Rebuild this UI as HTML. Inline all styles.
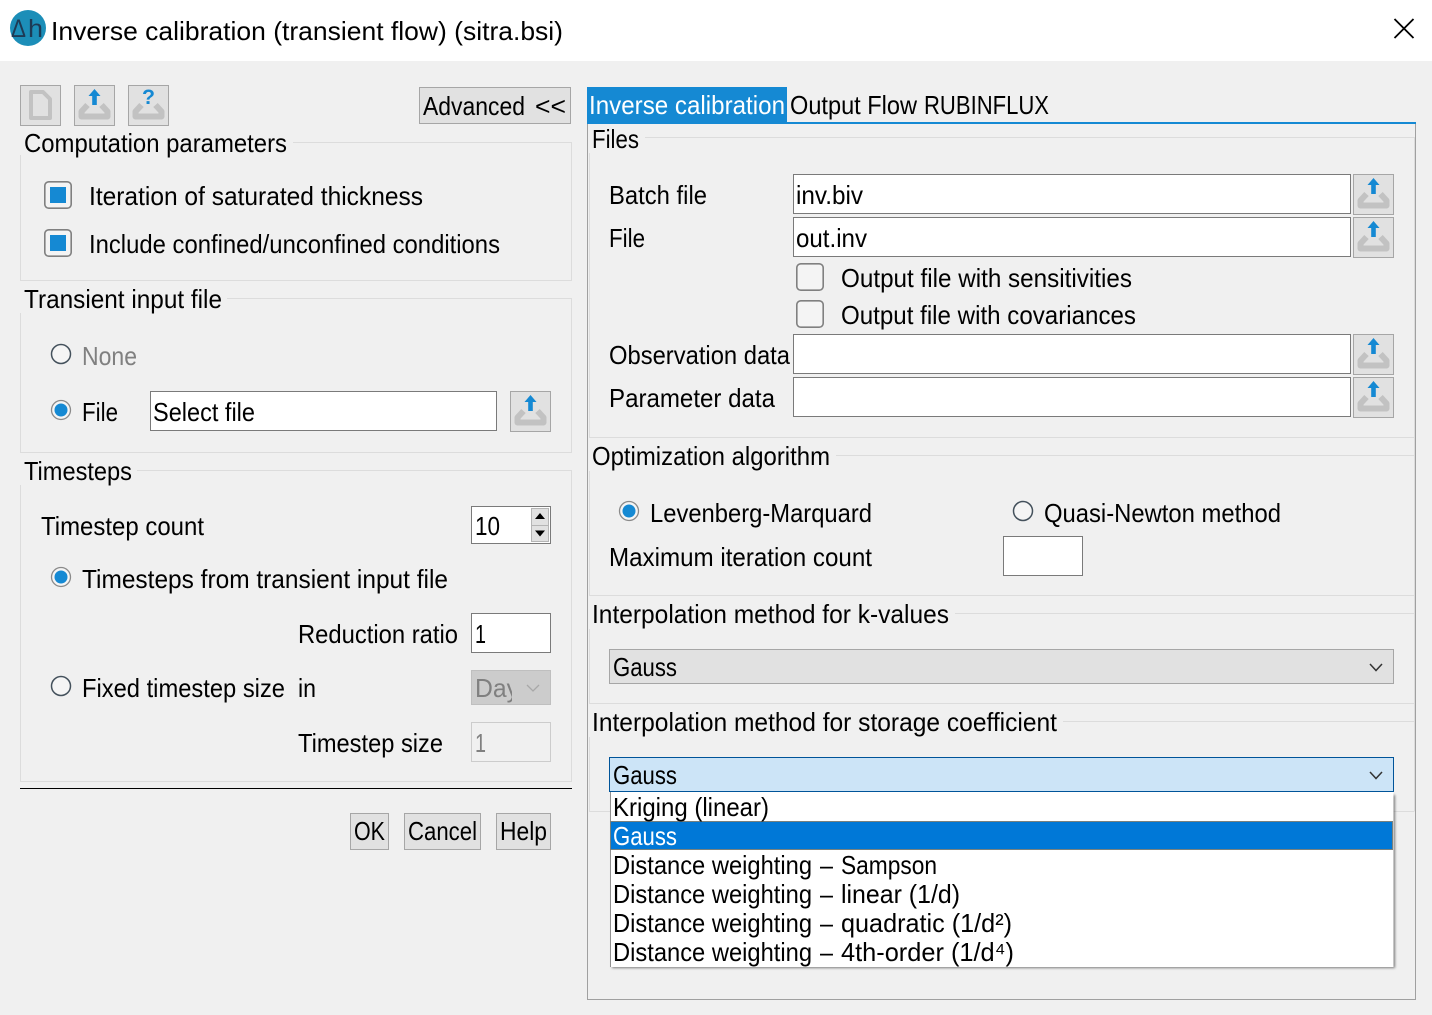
<!DOCTYPE html>
<html><head><meta charset="utf-8"><title>Inverse calibration</title>
<style>
html,body{margin:0;padding:0;background:#f0f0f0;overflow:hidden}
svg{display:block}
text{font-family:"Liberation Sans",sans-serif;font-size:26px;fill:#000}
.g{fill:#808080}
.w{fill:#fff}
.in{fill:#fff;stroke:#7a7a7a;stroke-width:1}
.btn{fill:#e1e1e1;stroke:#a6a6a6;stroke-width:1}
.gb{fill:none;stroke:#dcdcdc;stroke-width:1}
</style></head><body>
<svg width="1432" height="1015" viewBox="0 0 1432 1015" xmlns="http://www.w3.org/2000/svg">
<defs>
<filter id="sh" x="-2%" y="-5%" width="104%" height="110%"><feGaussianBlur stdDeviation="1.200"/></filter>
<g id="tray"><path d="M13.500 20 L7.500 26.500 V31.500 H33.500 V26.500 L27.500 20" fill="none" stroke="#c2c2c2" stroke-width="6" stroke-linejoin="round"/></g>
<g id="up"><rect x="0.500" y="0.500" width="40" height="40" class="btn"/><use href="#tray"/><path d="M20.500 4 L26.500 11 H22.800 V20 H18.200 V11 H14.500 Z" fill="#1589d3"/></g>
<g id="cb"><rect x="0.800" y="0.800" width="26.400" height="26.400" rx="4" fill="#f4f4f4" stroke="#808080" stroke-width="1.600"/></g>
<g id="cbc"><use href="#cb"/><rect x="6" y="6" width="16" height="16" fill="#1589d3"/></g>
<g id="rc"><circle r="9.500" fill="#f5f5f5" stroke="#8a8a8a" stroke-width="1.300"/><circle r="6.500" fill="#1589d3"/></g>
<g id="ro"><circle r="9.500" fill="#f5f5f5" stroke="#44515c" stroke-width="1.500"/></g>
</defs>

<rect width="1432" height="1015" fill="#f0f0f0"/>
<rect width="1432" height="61" fill="#fff"/>
<circle cx="28" cy="28" r="18" fill="#1c8eb8"/>
<text x="11" y="37" textLength="15" lengthAdjust="spacingAndGlyphs" style="font-size:25px;fill:#1d3a55">Δ</text>
<text x="28" y="37" textLength="15" lengthAdjust="spacingAndGlyphs" style="font-size:25px;fill:#1d3a55">h</text>
<text x="51" y="40" textLength="512" lengthAdjust="spacingAndGlyphs">Inverse calibration (transient flow) (sitra.bsi)</text>
<path d="M1394.500 19 L1413.500 38 M1413.500 19 L1394.500 38" stroke="#000" stroke-width="1.800"/>

<!-- toolbar -->
<rect x="20.500" y="85.500" width="40" height="40" class="btn"/>
<path d="M31 92 H43 L50 99 V118 H31 Z" fill="none" stroke="#c2c2c2" stroke-width="4" stroke-linejoin="round"/>
<use href="#up" x="74" y="85"/>
<rect x="128.500" y="85.500" width="40" height="40" class="btn"/>
<use href="#tray" x="128" y="85"/>
<text x="142" y="104" textLength="13" lengthAdjust="spacingAndGlyphs" style="font-size:21px;font-weight:bold;fill:#1589d3">?</text>
<rect x="419.500" y="87.500" width="151" height="36" class="btn"/>
<text x="423" y="115" textLength="102" lengthAdjust="spacingAndGlyphs">Advanced</text>
<text x="535" y="115" textLength="31" lengthAdjust="spacingAndGlyphs">&lt;&lt;</text>

<!-- left groups -->
<path d="M20.500 155 V280.500 H571.500 V142.500 H293" class="gb"/>
<text x="24" y="152" textLength="263" lengthAdjust="spacingAndGlyphs">Computation parameters</text>
<use href="#cbc" x="44" y="181"/>
<text x="89" y="205" textLength="334" lengthAdjust="spacingAndGlyphs">Iteration of saturated thickness</text>
<use href="#cbc" x="44" y="229"/>
<text x="89" y="253" textLength="411" lengthAdjust="spacingAndGlyphs">Include confined/unconfined conditions</text>

<path d="M20.500 313 V452.500 H571.500 V298.500 H227" class="gb"/>
<text x="24" y="308" textLength="198" lengthAdjust="spacingAndGlyphs">Transient input file</text>
<use href="#ro" x="61" y="354"/>
<text x="82" y="365" textLength="55" lengthAdjust="spacingAndGlyphs" class="g">None</text>
<use href="#rc" x="61" y="410"/>
<text x="82" y="421" textLength="36" lengthAdjust="spacingAndGlyphs">File</text>
<rect x="150.500" y="391.500" width="346" height="39" class="in"/>
<text x="153" y="421" textLength="102" lengthAdjust="spacingAndGlyphs">Select file</text>
<use href="#up" x="510" y="391"/>

<path d="M20.500 485 V781.500 H571.500 V470.500 H137" class="gb"/>
<text x="24" y="480" textLength="108" lengthAdjust="spacingAndGlyphs">Timesteps</text>
<text x="41" y="535" textLength="163" lengthAdjust="spacingAndGlyphs">Timestep count</text>
<rect x="471.500" y="506.500" width="79" height="37" class="in"/>
<text x="475" y="535" textLength="25" lengthAdjust="spacingAndGlyphs">10</text>
<rect x="531.500" y="508.500" width="17" height="17" fill="#e1e1e1" stroke="#b5b5b5"/>
<rect x="531.500" y="525.500" width="17" height="16" fill="#e1e1e1" stroke="#b5b5b5"/>
<path d="M540 513 L545 519 H535 Z M540 536.500 L545 530.500 H535 Z" fill="#000"/>
<use href="#rc" x="61" y="577"/>
<text x="82" y="588" textLength="366" lengthAdjust="spacingAndGlyphs">Timesteps from transient input file</text>
<text x="298" y="643" textLength="160" lengthAdjust="spacingAndGlyphs">Reduction ratio</text>
<rect x="471.500" y="613.500" width="79" height="39" class="in"/>
<text x="475" y="643" textLength="11" lengthAdjust="spacingAndGlyphs">1</text>
<use href="#ro" x="61" y="686"/>
<text x="82" y="697" textLength="203" lengthAdjust="spacingAndGlyphs">Fixed timestep size</text>
<text x="298" y="697" textLength="18" lengthAdjust="spacingAndGlyphs">in</text>
<rect x="471.500" y="670.500" width="79" height="34" fill="#cccccc" stroke="#bfbfbf" stroke-width="1"/>
<svg x="475" y="670" width="37" height="35"><text x="0" y="27" textLength="44" lengthAdjust="spacingAndGlyphs" class="g">Day</text></svg>
<path d="M527 685 L533 691 L539 685" fill="none" stroke="#a8a8a8" stroke-width="1.300"/>
<text x="298" y="752" textLength="145" lengthAdjust="spacingAndGlyphs">Timestep size</text>
<rect x="471.500" y="722.500" width="79" height="39" fill="#f0f0f0" stroke="#cccccc" stroke-width="1"/>
<text x="475" y="752" textLength="11" lengthAdjust="spacingAndGlyphs" class="g">1</text>

<rect x="20" y="788" width="552" height="1" fill="#000"/>
<rect x="350.500" y="813.500" width="38" height="36" class="btn"/>
<text x="354" y="840" textLength="31" lengthAdjust="spacingAndGlyphs">OK</text>
<rect x="404.500" y="813.500" width="76" height="36" class="btn"/>
<text x="408" y="840" textLength="69" lengthAdjust="spacingAndGlyphs">Cancel</text>
<rect x="496.500" y="813.500" width="54" height="36" class="btn"/>
<text x="500" y="840" textLength="47" lengthAdjust="spacingAndGlyphs">Help</text>

<!-- tabs -->
<rect x="587.500" y="123.500" width="828" height="876" fill="#f0f0f0" stroke="#a0a0a0" stroke-width="1"/>
<rect x="587" y="122" width="829" height="2" fill="#1589d3"/>
<rect x="587" y="87" width="200" height="37" fill="#1589d3"/>
<text x="589" y="114" textLength="196" lengthAdjust="spacingAndGlyphs" class="w">Inverse calibration</text>
<text x="790" y="114" textLength="127" lengthAdjust="spacingAndGlyphs">Output Flow</text>
<text x="924" y="114" textLength="125" lengthAdjust="spacingAndGlyphs">RUBINFLUX</text>

<path d="M645 137.500 H1414.500 V811 M589.500 153 V437.500 H1414.500" class="gb"/>
<text x="592" y="148" textLength="47" lengthAdjust="spacingAndGlyphs">Files</text>
<text x="609" y="204" textLength="98" lengthAdjust="spacingAndGlyphs">Batch file</text>
<rect x="793.500" y="174.500" width="557" height="39" class="in"/>
<text x="796" y="204" textLength="67" lengthAdjust="spacingAndGlyphs">inv.biv</text>
<use href="#up" x="1353" y="174"/>
<text x="609" y="247" textLength="36" lengthAdjust="spacingAndGlyphs">File</text>
<rect x="793.500" y="217.500" width="557" height="39" class="in"/>
<text x="796" y="247" textLength="71" lengthAdjust="spacingAndGlyphs">out.inv</text>
<use href="#up" x="1353" y="217"/>
<use href="#cb" x="796" y="263"/>
<text x="841" y="287" textLength="291" lengthAdjust="spacingAndGlyphs">Output file with sensitivities</text>
<use href="#cb" x="796" y="300"/>
<text x="841" y="324" textLength="295" lengthAdjust="spacingAndGlyphs">Output file with covariances</text>
<text x="609" y="364" textLength="181" lengthAdjust="spacingAndGlyphs">Observation data</text>
<rect x="793.500" y="334.500" width="557" height="39" class="in"/>
<use href="#up" x="1353" y="334"/>
<text x="609" y="407" textLength="166" lengthAdjust="spacingAndGlyphs">Parameter data</text>
<rect x="793.500" y="377.500" width="557" height="39" class="in"/>
<use href="#up" x="1353" y="377"/>

<path d="M836 455.500 H1414.500 M589.500 471 V595.500 H1414.500" class="gb"/>
<text x="592" y="465" textLength="238" lengthAdjust="spacingAndGlyphs">Optimization algorithm</text>
<use href="#rc" x="629" y="511"/>
<text x="650" y="522" textLength="222" lengthAdjust="spacingAndGlyphs">Levenberg-Marquard</text>
<use href="#ro" x="1023" y="511"/>
<text x="1044" y="522" textLength="237" lengthAdjust="spacingAndGlyphs">Quasi-Newton method</text>
<text x="609" y="566" textLength="263" lengthAdjust="spacingAndGlyphs">Maximum iteration count</text>
<rect x="1003.500" y="536.500" width="79" height="39" class="in"/>

<path d="M955 613.500 H1414.500 M589.500 629 V703.500 H1414.500" class="gb"/>
<text x="592" y="623" textLength="357" lengthAdjust="spacingAndGlyphs">Interpolation method for k-values</text>
<rect x="609.500" y="649.500" width="784" height="34" class="btn"/>
<text x="613" y="676" textLength="64" lengthAdjust="spacingAndGlyphs">Gauss</text>
<path d="M1370 664 L1376 670.500 L1382 664" fill="none" stroke="#333" stroke-width="1.500"/>

<path d="M1063 721.500 H1414.500 M589.500 737 V811.500 H1414.500" class="gb"/>
<text x="592" y="731" textLength="465" lengthAdjust="spacingAndGlyphs">Interpolation method for storage coefficient</text>
<rect x="609.500" y="757.500" width="784" height="34" fill="#cce4f7" stroke="#005499" stroke-width="1"/>
<text x="613" y="784" textLength="64" lengthAdjust="spacingAndGlyphs">Gauss</text>
<path d="M1370 772 L1376 778.500 L1382 772" fill="none" stroke="#333" stroke-width="1.500"/>

<!-- popup -->
<rect x="612" y="795" width="783" height="173" fill="#555" filter="url(#sh)" opacity="0.75"/>
<rect x="610" y="792" width="783.500" height="175" fill="#fff"/>
<rect x="610" y="792" width="1" height="175" fill="#909090"/>
<rect x="610" y="821" width="783" height="29" fill="#0078d7"/>
<rect x="610.500" y="821.500" width="782" height="28" fill="none" stroke="#f08a24" stroke-width="1" stroke-dasharray="1 1"/>
<text x="613" y="816" textLength="156" lengthAdjust="spacingAndGlyphs">Kriging (linear)</text>
<text x="613" y="845" textLength="64" lengthAdjust="spacingAndGlyphs" class="w">Gauss</text>
<text x="613" y="874" textLength="199" lengthAdjust="spacingAndGlyphs">Distance weighting</text>
<text x="820" y="874" textLength="13" lengthAdjust="spacingAndGlyphs">–</text>
<text x="841" y="874" textLength="96" lengthAdjust="spacingAndGlyphs">Sampson</text>
<text x="613" y="903" textLength="199" lengthAdjust="spacingAndGlyphs">Distance weighting</text>
<text x="820" y="903" textLength="13" lengthAdjust="spacingAndGlyphs">–</text>
<text x="841" y="903" textLength="119" lengthAdjust="spacingAndGlyphs">linear (1/d)</text>
<text x="613" y="932" textLength="199" lengthAdjust="spacingAndGlyphs">Distance weighting</text>
<text x="820" y="932" textLength="13" lengthAdjust="spacingAndGlyphs">–</text>
<text x="841" y="932" textLength="171" lengthAdjust="spacingAndGlyphs">quadratic (1/d²)</text>
<text x="613" y="961" textLength="199" lengthAdjust="spacingAndGlyphs">Distance weighting</text>
<text x="820" y="961" textLength="13" lengthAdjust="spacingAndGlyphs">–</text>
<text x="841" y="961" textLength="173" lengthAdjust="spacingAndGlyphs">4th-order (1/d⁴)</text>
</svg>
</body></html>
